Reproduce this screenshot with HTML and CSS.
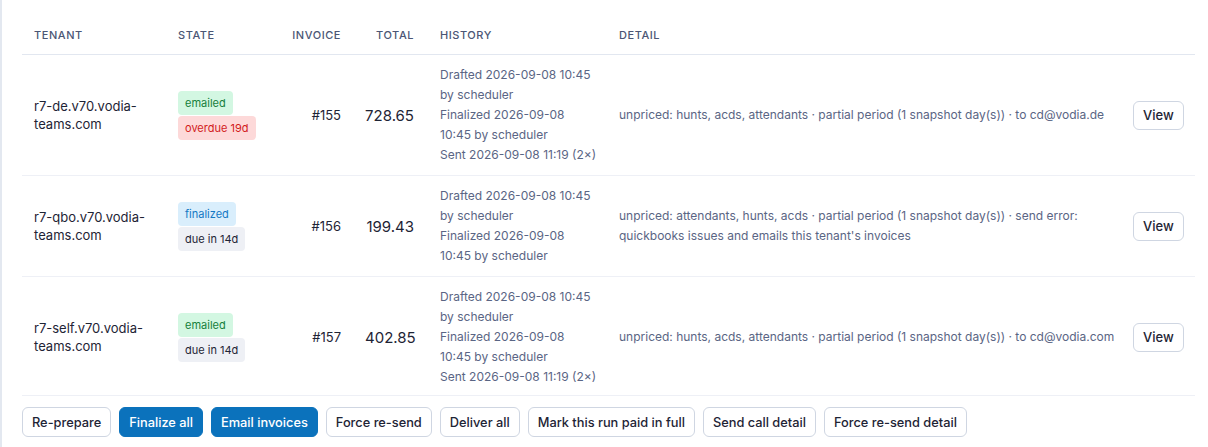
FILE: index.html
```html
<!DOCTYPE html>
<html>
<head>
<meta charset="utf-8">
<link rel="stylesheet" href="styles.css">
</head>
<body>
<div class="card">
  <table class="runs">
    <colgroup>
      <col class="c-tenant"><col class="c-state"><col class="c-invoice"><col class="c-total"><col class="c-history"><col class="c-detail"><col class="c-action">
    </colgroup>
    <thead>
      <tr>
        <th>Tenant</th>
        <th>State</th>
        <th class="num">Invoice</th>
        <th class="num">Total</th>
        <th>History</th>
        <th>Detail</th>
        <th></th>
      </tr>
    </thead>
    <tbody>
      <tr>
        <td class="tenant">r7-de.v70.vodia-teams.com</td>
        <td><div class="badges"><span class="badge green">emailed</span><span class="badge red">overdue 19d</span></div></td>
        <td class="num inv">#155</td>
        <td class="num total">728.65</td>
        <td class="history"><div class="hist"><div>Drafted 2026-09-08 10:45 by scheduler</div><div>Finalized 2026-09-08 10:45 by scheduler</div><div class="sent">Sent 2026-09-08 11:19 (2×)</div></div></td>
        <td class="detail">unpriced: hunts, acds, attendants · partial period (1 snapshot day(s)) · to cd@vodia.de</td>
        <td class="action"><button class="btn view">View</button></td>
      </tr>
      <tr>
        <td class="tenant">r7-qbo.v70.vodia-teams.com</td>
        <td><div class="badges"><span class="badge blue">finalized</span><span class="badge gray">due in 14d</span></div></td>
        <td class="num inv">#156</td>
        <td class="num total">199.43</td>
        <td class="history"><div class="hist"><div>Drafted 2026-09-08 10:45 by scheduler</div><div>Finalized 2026-09-08 10:45 by scheduler</div></div></td>
        <td class="detail">unpriced: attendants, hunts, acds · partial period (1 snapshot day(s)) · send error: quickbooks issues and emails this tenant's invoices</td>
        <td class="action"><button class="btn view">View</button></td>
      </tr>
      <tr>
        <td class="tenant">r7-self.v70.vodia-teams.com</td>
        <td><div class="badges"><span class="badge green">emailed</span><span class="badge gray">due in 14d</span></div></td>
        <td class="num inv">#157</td>
        <td class="num total">402.85</td>
        <td class="history"><div class="hist"><div>Drafted 2026-09-08 10:45 by scheduler</div><div>Finalized 2026-09-08 10:45 by scheduler</div><div class="sent">Sent 2026-09-08 11:19 (2×)</div></div></td>
        <td class="detail">unpriced: hunts, acds, attendants · partial period (1 snapshot day(s)) · to cd@vodia.com</td>
        <td class="action"><button class="btn view">View</button></td>
      </tr>
    </tbody>
  </table>
  <div class="actions">
    <button class="btn">Re-prepare</button>
    <button class="btn primary">Finalize all</button>
    <button class="btn primary">Email invoices</button>
    <button class="btn">Force re-send</button>
    <button class="btn">Deliver all</button>
    <button class="btn">Mark this run paid in full</button>
    <button class="btn">Send call detail</button>
    <button class="btn">Force re-send detail</button>
  </div>
</div>
</body>
</html>
```

FILE: styles.css
```css
* { box-sizing: border-box; }
html, body { margin: 0; padding: 0; background: #ffffff; }
body {
  font-family: Inter, "Noto Sans", "Liberation Sans", sans-serif;
  color: #1e2435;
  height: 447px;
  overflow: hidden;
}
.card {
  border-left: 2px solid #e3e8f0;
  height: 447px;
  padding: 16px 13px 0 20px;
}
.runs {
  width: 1173px;
  border-collapse: collapse;
  table-layout: fixed;
}
.c-tenant { width: 144px; }
.c-state { width: 110px; }
.c-invoice { width: 77px; }
.c-total { width: 75px; }
.c-history { width: 179px; }
.c-detail { width: 514px; }
.c-action { width: 74px; }
.runs th {
  font-size: 11px;
  line-height: 14px;
  font-weight: 500;
  text-transform: uppercase;
  letter-spacing: 0.05em;
  color: #4b5675;
  text-align: left;
  padding: 12px 12px;
  border-bottom: 1px solid #e2e7f0;
}
.runs th.num, .runs td.num { text-align: right; }
.runs th.num:nth-child(4), .runs td.total { padding-right: 14px; }
.runs td {
  padding: 10px 12px;
  vertical-align: middle;
  border-bottom: 1px solid #eef0f6;
}
.runs tbody tr:last-child td { padding-bottom: 8px; }
.tenant {
  font-size: 13px;
  line-height: 18px;
  color: #1e2435;
}
.badges {
  display: flex;
  flex-direction: column;
  align-items: flex-start;
  gap: 1px;
}
.badge {
  display: inline-block;
  font-size: 11px;
  line-height: 16px;
  padding: 4px 7px;
  border-radius: 4px;
}
.badge.green { background: #d3f7e2; color: #16803c; }
.badge.red { background: #fdd9d9; color: #d21c1c; }
.badge.blue { background: #d9eefc; color: #1479c4; }
.badge.gray { background: #eef0f5; color: #1e2435; }
.inv { font-size: 13px; color: #1e2435; }
.total { font-size: 15px; color: #1e2435; }
.history {
  font-size: 12px;
  line-height: 20px;
  color: #5a6584;
}
.hist { max-width: 153px; }
.sent { white-space: nowrap; }
.runs td.detail {
  font-size: 12px;
  line-height: 20px;
  color: #5a6584;
  padding-right: 0;
}
.action { text-align: left; }
.btn {
  font-family: inherit;
  font-size: 12.8px;
  font-weight: 500;
  height: 30px;
  padding: 0 9px;
  border: 1px solid #cfd6e2;
  border-radius: 6px;
  background: #ffffff;
  color: #1e2435;
  cursor: pointer;
}
.btn.view { height: 29px; padding: 0 9px; font-size: 13px; }
.btn.primary {
  background: #0b72bc;
  border-color: #0b72bc;
  color: #ffffff;
}
.actions {
  display: flex;
  gap: 8px;
  padding-top: 11px;
}
```
